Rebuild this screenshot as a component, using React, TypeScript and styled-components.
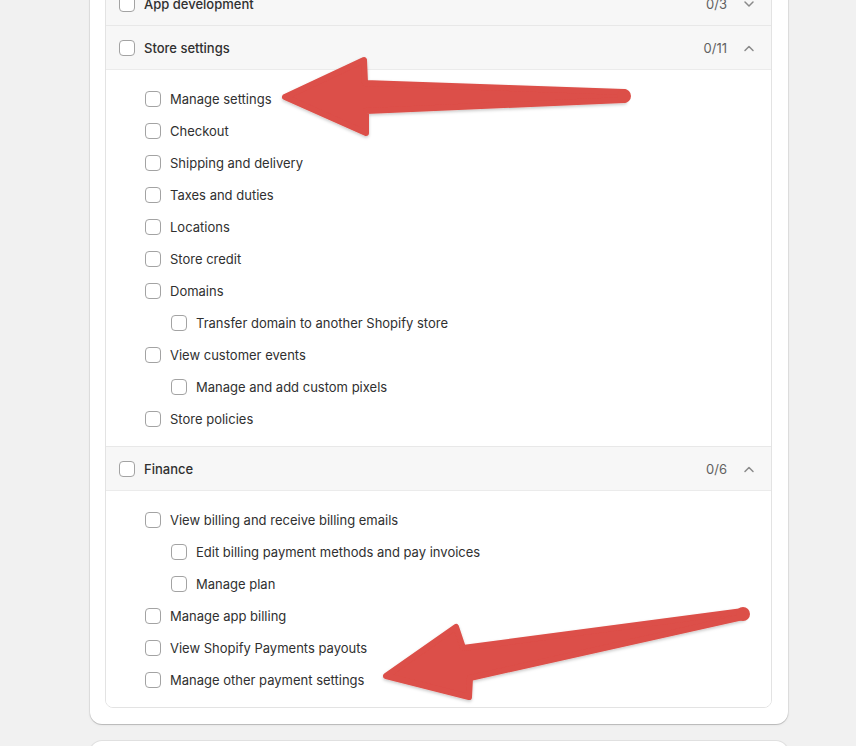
import React from 'react'
import styled, { createGlobalStyle } from 'styled-components'

const GlobalStyle = createGlobalStyle`
	html, body {
		margin: 0;
		padding: 0;
		background: #f1f1f1;
		font-family: Inter, "Noto Sans", sans-serif;
		-webkit-font-smoothing: antialiased;
	}
`

type Item = { label: string; level: number }

type Section = {
	title: string
	count: string
	open: boolean
	items: Item[]
}

const sections: Section[] = [
	{ title: 'App development', count: '0/3', open: false, items: [] },
	{
		title: 'Store settings',
		count: '0/11',
		open: true,
		items: [
			{ label: 'Manage settings', level: 1 },
			{ label: 'Checkout', level: 1 },
			{ label: 'Shipping and delivery', level: 1 },
			{ label: 'Taxes and duties', level: 1 },
			{ label: 'Locations', level: 1 },
			{ label: 'Store credit', level: 1 },
			{ label: 'Domains', level: 1 },
			{ label: 'Transfer domain to another Shopify store', level: 2 },
			{ label: 'View customer events', level: 1 },
			{ label: 'Manage and add custom pixels', level: 2 },
			{ label: 'Store policies', level: 1 },
		],
	},
	{
		title: 'Finance',
		count: '0/6',
		open: true,
		items: [
			{ label: 'View billing and receive billing emails', level: 1 },
			{ label: 'Edit billing payment methods and pay invoices', level: 2 },
			{ label: 'Manage plan', level: 2 },
			{ label: 'Manage app billing', level: 1 },
			{ label: 'View Shopify Payments payouts', level: 1 },
			{ label: 'Manage other payment settings', level: 1 },
		],
	},
]

const Chevron = ({ up }: { up: boolean }) => (
	<ChevronIcon viewBox='0 0 20 20' width='20' height='20'>
		<path
			d={up ? 'M6 12.5l4-4 4 4' : 'M6 8l4 4 4-4'}
			fill='none'
			stroke='#8a8a8a'
			strokeWidth='1.5'
			strokeLinecap='round'
			strokeLinejoin='round'
		/>
	</ChevronIcon>
)

const Arrows = () => (
	<ArrowLayer viewBox='0 0 856 746' width='856' height='746'>
		<defs>
			<filter id='shadow' x='-10%' y='-20%' width='120%' height='140%'>
				<feDropShadow dx='0' dy='1.5' stdDeviation='1.5' floodColor='#000' floodOpacity='0.22' />
			</filter>
		</defs>
		<g fill='#dc4f48' stroke='#dc4f48' strokeLinejoin='round' strokeWidth='6' filter='url(#shadow)'>
			<polygon points='285,97 364,60 365,83 624,92 624,100 366,111 366,133' />
			<polygon points='386,676 456,627 463,648 743,611 743,617 470,678 469,697' />
		</g>
		<g fill='#dc4f48'>
			<circle cx='624' cy='96' r='7' />
			<circle cx='743' cy='614' r='7' />
		</g>
	</ArrowLayer>
)

const App = () => {
	return (
		<>
			<GlobalStyle />
			<Page>
				<Card>
					<Group>
						{sections.map((section) => (
							<SectionBlock key={section.title}>
								<SectionHeader>
									<Checkbox />
									<HeaderLabel>{section.title}</HeaderLabel>
									<Count>{section.count}</Count>
									<Chevron up={section.open} />
								</SectionHeader>
								{section.open && (
									<ItemList>
										{section.items.map((item) => (
											<ItemRow key={item.label} level={item.level}>
												<Checkbox />
												<ItemLabel>{item.label}</ItemLabel>
											</ItemRow>
										))}
									</ItemList>
								)}
							</SectionBlock>
						))}
					</Group>
				</Card>
				<NextCard />
				<Arrows />
			</Page>
		</>
	)
}

const Page = styled.div`
	position: relative;
	width: 856px;
	height: 746px;
	overflow: hidden;
`

const Card = styled.div`
	margin: -35px 0 0 90px;
	width: 698px;
	box-sizing: border-box;
	padding: 16px 16px 16px 15px;
	background: #fff;
	border-radius: 12px;
	box-shadow: 0 1px 0 0 rgba(0, 0, 0, 0.12), 0 0 0 1px rgba(0, 0, 0, 0.06), 0 1px 3px rgba(0, 0, 0, 0.08);
`

const NextCard = styled.div`
	margin: 17px 0 0 90px;
	width: 698px;
	height: 60px;
	background: #fff;
	border-radius: 12px;
	box-shadow: 0 0 0 1px rgba(0, 0, 0, 0.06), 0 1px 3px rgba(0, 0, 0, 0.08);
`

const Group = styled.div`
	border: 1px solid #e3e3e3;
	border-radius: 8px;
	overflow: hidden;
`

const SectionBlock = styled.div`
	& + & {
		border-top: 1px solid #e8e8e8;
	}
`

const SectionHeader = styled.div`
	display: flex;
	align-items: center;
	height: 43px;
	padding: 0 12px 0 13px;
	background: #f7f7f7;
	border-bottom: 1px solid #ebebeb;

	${SectionBlock}:not(:has(ul)) & {
		border-bottom: none;
	}
`

const Checkbox = styled.span`
	flex: none;
	width: 16px;
	height: 16px;
	box-sizing: border-box;
	border: 1px solid #a3a3a3;
	border-radius: 4px;
	background: #fff;
`

const HeaderLabel = styled.span`
	flex: 1;
	margin-left: 9px;
	font-size: 13px;
	font-weight: 500;
	color: #303030;
`

const Count = styled.span`
	font-size: 13px;
	color: #616161;
	margin-right: 12px;
`

const ChevronIcon = styled.svg`
	flex: none;
	display: block;
`

const ItemList = styled.ul`
	list-style: none;
	margin: 0;
	padding: 13px 0 11px;
	background: #fff;
`

const ItemRow = styled.li<{ level: number }>`
	display: flex;
	align-items: center;
	height: 32px;
	padding-left: ${(props) => 13 + props.level * 26}px;
`

const ItemLabel = styled.span`
	margin-left: 9px;
	font-size: 13px;
	color: #303030;
`

const ArrowLayer = styled.svg`
	position: absolute;
	left: 0;
	top: 0;
	pointer-events: none;
`

export default App
